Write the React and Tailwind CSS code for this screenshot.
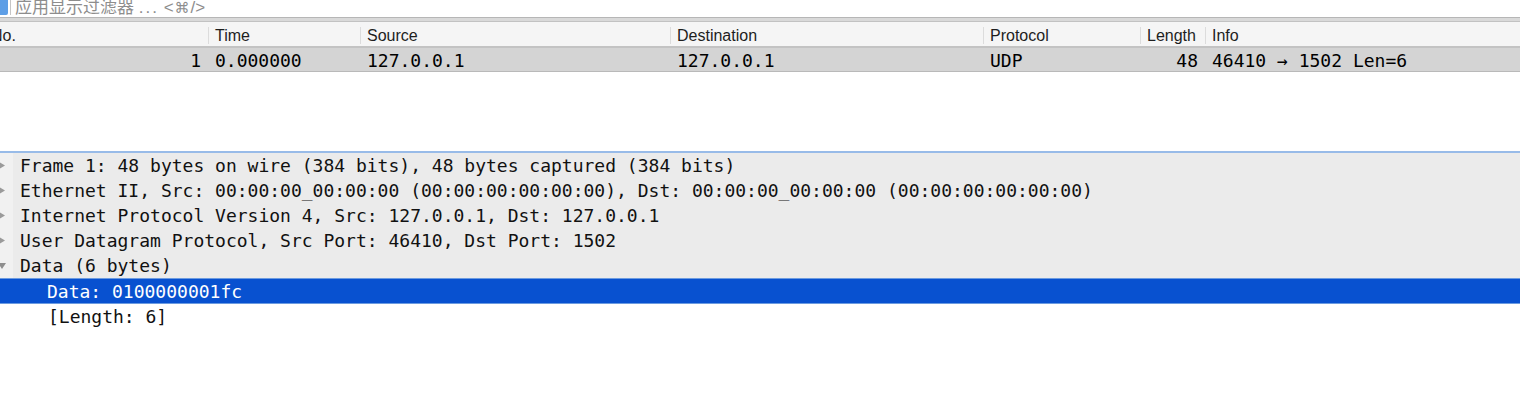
const mono = { fontFamily: '"DejaVu Sans Mono", monospace' };

const cols = [
  { label: 'No.', w: 'w-[208px]', right: true },
  { label: 'Time', w: 'w-[152px]' },
  { label: 'Source', w: 'w-[310px]' },
  { label: 'Destination', w: 'w-[313px]' },
  { label: 'Protocol', w: 'w-[157px]' },
  { label: 'Length', w: 'w-[65px]', right: true },
  { label: 'Info', w: 'flex-1' },
];

const row = ['1', '0.000000', '127.0.0.1', '127.0.0.1', 'UDP', '48', '46410 → 1502 Len=6'];

const tree = [
  { text: 'Frame 1: 48 bytes on wire (384 bits), 48 bytes captured (384 bits)', open: false },
  { text: 'Ethernet II, Src: 00:00:00_00:00:00 (00:00:00:00:00:00), Dst: 00:00:00_00:00:00 (00:00:00:00:00:00)', open: false },
  { text: 'Internet Protocol Version 4, Src: 127.0.0.1, Dst: 127.0.0.1', open: false },
  { text: 'User Datagram Protocol, Src Port: 46410, Dst Port: 1502', open: false },
  { text: 'Data (6 bytes)', open: true },
];

function Arrow({ open }) {
  return (
    <svg width="8" height="9" viewBox="0 0 8 9" className="ml-[-2px]">
      {open ? <path d="M0 2 L8 2 L4 8 Z" fill="#8e8e8e" /> : <path d="M1 1 L7 4.5 L1 8 Z" fill="#9a9a9a" />}
    </svg>
  );
}

export default function App() {
  return (
    <div className="w-[1520px] h-[406px] bg-white overflow-hidden" style={{ fontFamily: '"Liberation Sans", "Noto Sans CJK SC", sans-serif' }}>
      {/* display filter */}
      <div className="h-[17px] flex items-stretch overflow-hidden">
        <div className="w-[8px] h-[15px] bg-[#5d9ee6] rounded-br-[2px]" />
        <div className="w-[1px] h-[15px] ml-[2px] bg-[#c6c6c6]" />
        <div className="ml-[4px] text-[17px] leading-[16px] text-[#8d8d8d] whitespace-nowrap">
          应用显示过滤器 <span className="tracking-[2px]">...</span> &lt;<span style={{ fontFamily: '"DejaVu Sans", sans-serif' }} className="text-[15px] mx-[1px]">⌘</span>/&gt;
        </div>
      </div>
      <div className="h-[1px] bg-[#b6b6b6]" />
      <div className="h-[3px] bg-[#d9d9d9]" />
      <div className="h-[1px] bg-[#c2c2c2]" />

      {/* packet list header */}
      <div className="h-[24px] pt-[3px] bg-[#f5f5f5] flex items-center text-[16px] text-[#1e1e1e]">
        {cols.map((c, i) => (
          <div key={c.label} className={`${c.w} h-[17px] flex items-center ${i > 0 ? 'border-l border-[#dcdcdc]' : ''}`}>
            <span className={i === 0 ? 'ml-[-9px]' : 'ml-[6px]'}>{c.label}</span>
          </div>
        ))}
      </div>
      <div className="h-[2px] bg-[#c3c3c3]" />
      <div className="h-[23px] pt-[2px] bg-[#d4d4d4] flex items-center text-[18px] text-black" style={mono}>
        {cols.map((c, i) => (
          <div key={c.label} className={`${c.w} whitespace-nowrap ${c.right ? 'text-right pr-[7px]' : 'pl-[7px]'}`}>
            {row[i]}
          </div>
        ))}
      </div>
      <div className="h-[1px] bg-[#b9b9b9]" />

      <div className="h-[79px]" />

      {/* packet details */}
      <div className="h-[2px] bg-[#98bbe8]" />
      <div className="text-[18px]" style={mono}>
        {tree.map((t) => (
          <div key={t.text} className="h-[25px] flex items-center bg-[#ebebeb] whitespace-nowrap text-[#111]">
            <div className="w-[13px] h-full flex items-center bg-[#f1f1f1]">
              <Arrow open={t.open} />
            </div>
            <span className="ml-[7px]">{t.text}</span>
          </div>
        ))}
        <div className="h-[26px] flex items-center bg-[#0851d0] border-y border-[#6c9be0] text-white whitespace-nowrap">
          <span className="ml-[47px]">Data: 0100000001fc</span>
        </div>
        <div className="h-[25px] flex items-center whitespace-nowrap text-[#111]">
          <span className="ml-[48px]">[Length: 6]</span>
        </div>
      </div>
    </div>
  );
}
